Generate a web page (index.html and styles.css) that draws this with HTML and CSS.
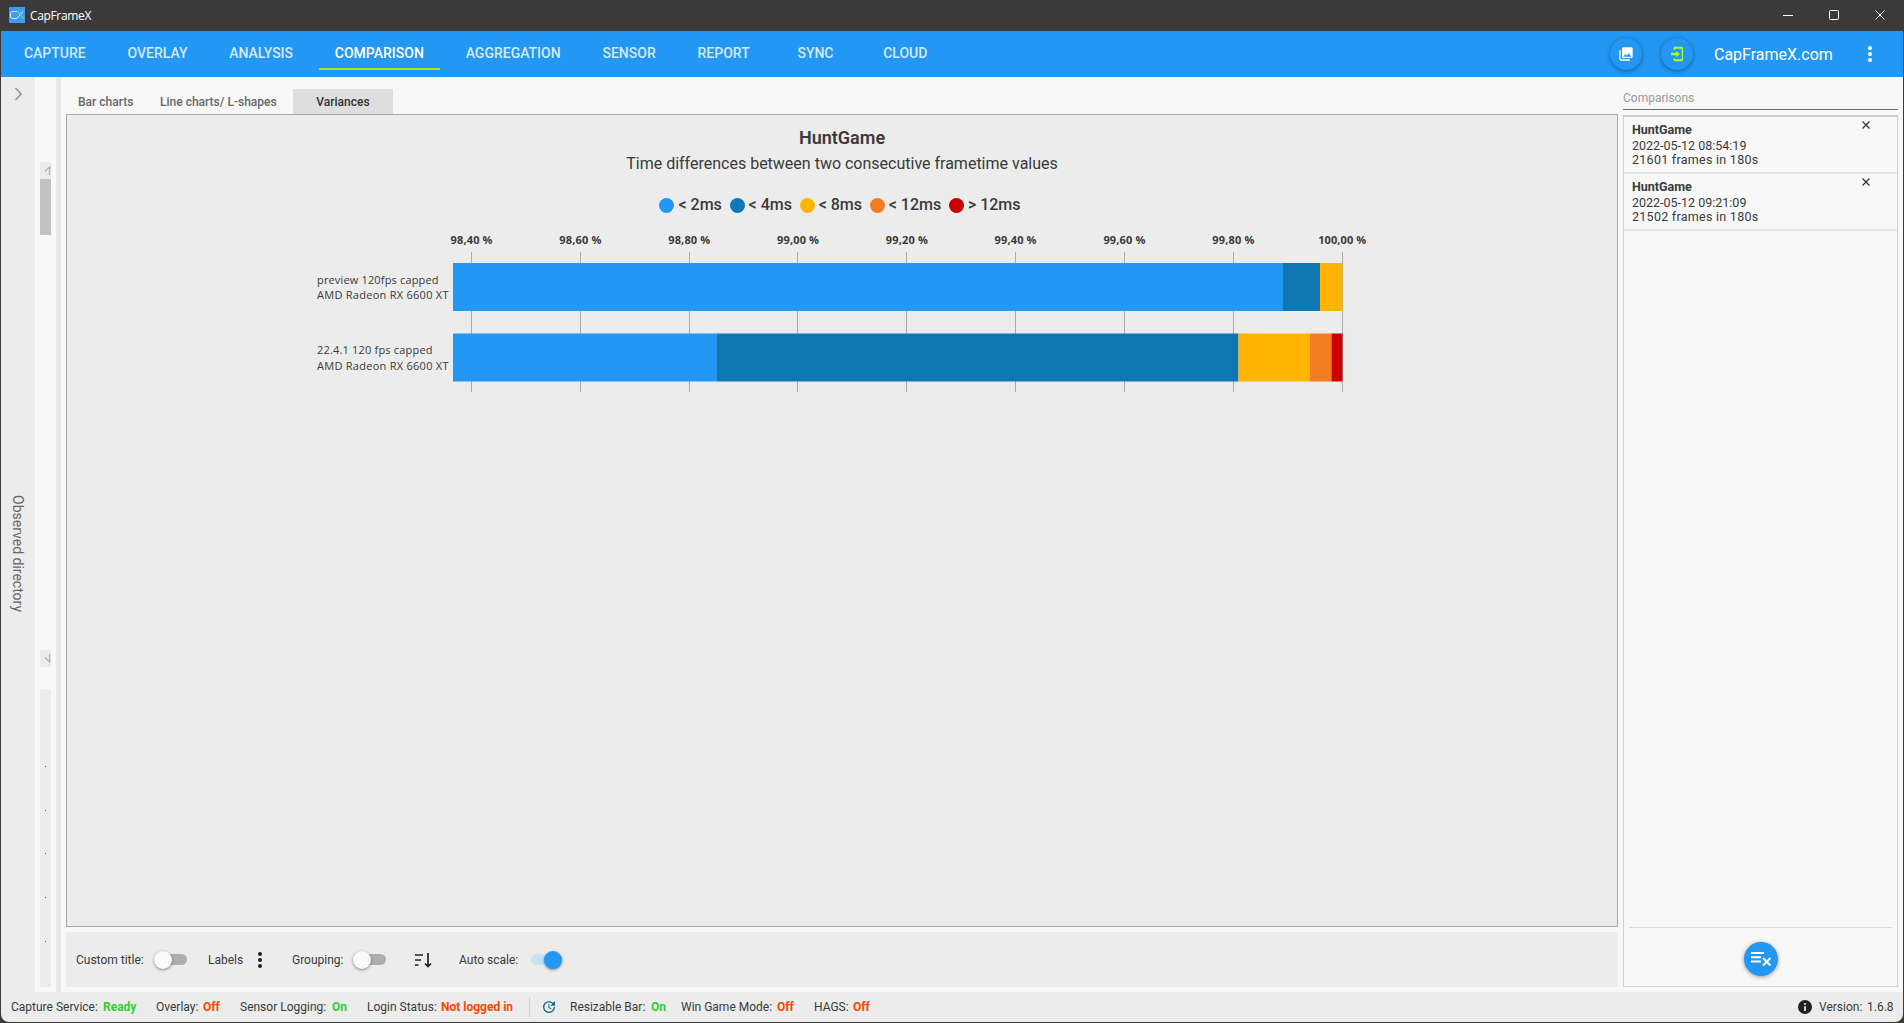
FILE: index.html
```html
<!DOCTYPE html>
<html>
<head>
    <meta charset="utf-8" />
    <title>CapFrameX</title>
    <link rel="stylesheet" href="styles.css">
</head>
<body>
    <div class="window">
        <div class="titlebar">
            <svg class="logo" width="16" height="16" viewBox="0 0 16 16">
                <rect width="16" height="16" fill="#3d9bff" />
                <path d="M8 4.500H3L1.500 6V10L3 11.500H8L14 4.500" fill="none" stroke="#d8ecff" />
                <path d="M9 4.500L14.500 11.500" fill="none" stroke="#6be03a" stroke-width="1.300" />
            </svg>
            <span class="app-name">CapFrameX</span>
            <div class="win-buttons">
                <svg width="10" height="10"><path d="M0 5.500H10" stroke="#fff" /></svg>
                <svg width="10" height="10"><rect x="0.500" y="0.500" width="9" height="9" rx="1" fill="none" stroke="#fff" /></svg>
                <svg width="10" height="10"><path d="M0.500 0.500L9.500 9.500M9.500 0.500L0.500 9.500" stroke="#fff" /></svg>
            </div>
        </div>

        <div class="navbar">
            <ul class="menu">
                <li>CAPTURE</li>
                <li>OVERLAY</li>
                <li>ANALYSIS</li>
                <li class="active">COMPARISON</li>
                <li>AGGREGATION</li>
                <li>SENSOR</li>
                <li>REPORT</li>
                <li>SYNC</li>
                <li>CLOUD</li>
            </ul>
            <div class="round">
                <svg width="16" height="16" viewBox="0 0 24 24"><path fill="#fff" d="M22 16V4c0-1.100-.9-2-2-2H8c-1.100 0-2 .9-2 2v12c0 1.100.9 2 2 2h12c1.100 0 2-.9 2-2zm-11-4l2.030 2.710L16 11l4 5H8l3-4zM2 6v14c0 1.100.9 2 2 2h14v-2H4V6H2z" /></svg>
            </div>
            <div class="round">
                <svg width="16" height="16" viewBox="0 0 24 24"><path fill="#adff2f" d="M19 1H9C7.900 1 7 1.900 7 3v3h2V4h10v16H9v-2H7v3c0 1.100.9 2 2 2h10c1.100 0 2-.9 2-2V3c0-1.100-.9-2-2-2zM11 17l5-5-5-5v3H3v4h8z" /></svg>
            </div>
            <span class="site">CapFrameX.com</span>
            <svg class="more" width="4" height="16"><g fill="#fff"><circle cx="2" cy="2" r="2" /><circle cx="2" cy="8" r="2" /><circle cx="2" cy="14" r="2" /></g></svg>
        </div>

        <div class="content">
            <div class="expander">
                <svg width="8" height="14"><path d="M1.500 1L7 7L1.500 13" fill="none" stroke="#999" stroke-width="1.700" /></svg>
                <span>Observed directory</span>
            </div>
            <div class="strip">
                <div class="scroll-btn"><svg width="7" height="9"><path d="M5.500 9V1M1 5.500L5.500 1L7 2.500" fill="none" stroke="#b4b4b4" stroke-width="1.300" /></svg></div>
                <div class="scroll-thumb"></div>
                <div class="scroll-track"></div>
                <div class="scroll-btn"><svg width="7" height="9"><path d="M5.500 0V8M1 3.500L5.500 8L7 6.500" fill="none" stroke="#b4b4b4" stroke-width="1.300" /></svg></div>
                <div class="info"><i></i><i></i><i></i><i></i><i></i></div>
            </div>
            <div class="splitter"></div>

            <div class="main">
                <ul class="tabs">
                    <li class="tab-bar">Bar charts</li>
                    <li class="tab-line">Line charts/ L-shapes</li>
                    <li class="tab-var active">Variances</li>
                </ul>
                <div class="chart">
                    <h1>HuntGame</h1>
                    <h2>Time differences between two consecutive frametime values</h2>
                    <ul class="legend">
                        <li><i class="c1"></i>&lt; 2ms</li>
                        <li><i class="c2"></i>&lt; 4ms</li>
                        <li><i class="c3"></i>&lt; 8ms</li>
                        <li><i class="c4"></i>&lt; 12ms</li>
                        <li><i class="c5"></i>&gt; 12ms</li>
                    </ul>
                    <svg class="plot" width="1140" height="170">
                        <g class="grid">
                            <path d="M221.500 27V167M330.500 27V167M439.500 27V167M547.500 27V167M656.500 27V167M765.500 27V167M874.500 27V167M983.500 27V167M1092.500 27V167" />
                        </g>
                        <g class="axis">
                            <text x="221.500" y="19" textLength="42">98,40 %</text>
                            <text x="330.300" y="19" textLength="42">98,60 %</text>
                            <text x="439.200" y="19" textLength="42">98,80 %</text>
                            <text x="548" y="19" textLength="42">99,00 %</text>
                            <text x="656.800" y="19" textLength="42">99,20 %</text>
                            <text x="765.500" y="19" textLength="42">99,40 %</text>
                            <text x="874.400" y="19" textLength="42">99,60 %</text>
                            <text x="983.300" y="19" textLength="42">99,80 %</text>
                            <text x="1092.200" y="19" textLength="48">100,00 %</text>
                        </g>
                        <g class="labels">
                            <text x="67" y="58.500" textLength="121.500">preview 120fps capped</text>
                            <text x="67" y="74" textLength="131.500">AMD Radeon RX 6600 XT</text>
                            <text x="67" y="129" textLength="115.500">22.4.1 120 fps capped</text>
                            <text x="67" y="145" textLength="131.500">AMD Radeon RX 6600 XT</text>
                        </g>
                        <!-- preview 120fps capped -->
                        <rect class="c1" x="203" y="38" width="830" height="48" />
                        <rect class="c2" x="1033" y="38" width="37" height="48" />
                        <rect class="c3" x="1070" y="38" width="22.500" height="48" />
                        <!-- 22.4.1 120 fps capped -->
                        <rect class="c1" x="203" y="108.500" width="264" height="48" />
                        <rect class="c2" x="467" y="108.500" width="521.500" height="48" />
                        <rect class="c3" x="988.500" y="108.500" width="71.500" height="48" />
                        <rect class="c4" x="1060" y="108.500" width="21.500" height="48" />
                        <rect class="c5" x="1081.500" y="108.500" width="11" height="48" />
                    </svg>
                </div>
                <div class="toolbar">
                    <span class="t-title">Custom title:</span>
                    <div class="switch"><i></i></div>
                    <span class="t-labels">Labels</span>
                    <svg class="dots" width="4" height="16"><g fill="#222"><circle cx="2" cy="2" r="2" /><circle cx="2" cy="8" r="2" /><circle cx="2" cy="14" r="2" /></g></svg>
                    <span class="t-group">Grouping:</span>
                    <div class="switch"><i></i></div>
                    <svg class="sort" width="18" height="16"><path d="M1 3H9M1 8H7M1 13H4.500M14 1V14M11 11.500L14 14.500L17 11.500" fill="none" stroke="#222" stroke-width="1.700" /></svg>
                    <span class="t-scale">Auto scale:</span>
                    <div class="switch on"><i></i></div>
                </div>
            </div>

            <div class="side">
                <div class="side-title">Comparisons</div>
                <div class="list">
                    <div class="record">
                        <svg width="8" height="8"><path d="M0.500 0.500L7.500 7.500M7.500 0.500L0.500 7.500" stroke="#333" stroke-width="1.200" /></svg>
                        <b>HuntGame</b>
                        <p>2022-05-12 08:54:19</p>
                        <p class="frames">21601 frames in 180s</p>
                    </div>
                    <div class="record">
                        <svg width="8" height="8"><path d="M0.500 0.500L7.500 7.500M7.500 0.500L0.500 7.500" stroke="#333" stroke-width="1.200" /></svg>
                        <b>HuntGame</b>
                        <p>2022-05-12 09:21:09</p>
                        <p class="frames">21502 frames in 180s</p>
                    </div>
                    <div class="list-foot">
                        <div class="clear">
                            <svg width="22" height="16"><path d="M1 2H14M1 6.300H11M1 10.600H11" stroke="#fff" stroke-width="2" /><path d="M13 7L20.500 14.500M20.500 7L13 14.500" stroke="#fff" stroke-width="2" /></svg>
                        </div>
                    </div>
                </div>
            </div>
        </div>

        <div class="status">
            <span class="s1">Capture Service:</span><b class="ok">Ready</b>
            <span class="s2">Overlay:</span><b class="bad">Off</b>
            <span class="s3">Sensor Logging:</span><b class="ok">On</b>
            <span class="s4">Login Status:</span><b class="bad">Not logged in</b>
            <i class="sep"></i>
            <svg class="refresh" width="16" height="16" viewBox="0 0 24 24"><path fill="#1b6594" d="M21 10.120h-6.780l2.740-2.820c-2.730-2.700-7.150-2.800-9.880-.1-2.730 2.710-2.730 7.080 0 9.790s7.150 2.710 9.880 0C18.320 15.650 19 14.080 19 12.100h2c0 1.980-.88 4.550-2.640 6.290-3.510 3.480-9.210 3.480-12.720 0-3.500-3.470-3.530-9.110-.02-12.580s9.140-3.470 12.650 0L21 3v7.120zM12.500 8v4.250l3.500 2.080-.72 1.210L11 13V8h1.500z" /></svg>
            <span class="s5">Resizable Bar:</span><b class="ok">On</b>
            <span class="s6">Win Game Mode:</span><b class="bad">Off</b>
            <span class="s7">HAGS:</span><b class="bad">Off</b>
            <svg class="about" width="14" height="14"><circle cx="7" cy="7" r="7" fill="#222" /><path d="M7 3V4.800M7 6.200V11" stroke="#fff" stroke-width="1.600" /></svg>
            <span class="version">Version:</span><span class="number">1.6.8</span>
        </div>
    </div>
</body>
</html>
```
FILE: styles.css
```css
* {
    box-sizing: border-box;
}

body {
    margin: 0;
    background-color: #3a3a3a;
    font-family: Roboto, "Liberation Sans", sans-serif;
    font-size: 12px;
    color: #3a3a3a;
}

ul, h1, h2, p {
    list-style: none;
    margin: 0;
    padding: 0;
}

svg {
    display: block;
    flex: none;
}

.window {
    height: 1023px;
    display: flex;
    flex-direction: column;
    padding: 0 1px 1px;
    overflow: hidden;
}

.titlebar {
    height: 31px;
    display: flex;
    align-items: center;
    padding: 0 0 1px 8px;
    color: #fff;
}

.app-name {
    margin-left: 5px;
    font-family: "Open Sans", sans-serif;
    font-size: 12px;
    letter-spacing: -0.35px;
}

.win-buttons {
    margin-left: auto;
    margin-right: 18px;
    display: flex;
    gap: 36px;
}

.navbar {
    height: 46px;
    background-color: #2297f3;
    display: flex;
    align-items: center;
    color: #fff;
}

.menu {
    display: flex;
    flex: 1;
    align-self: flex-start;
    padding: 5px 0 0 2px;
}

    .menu li {
        min-width: 80px;
        height: 34px;
        margin: 0 4.9px;
        padding: 0 16px;
        line-height: 34px;
        text-align: center;
        font-size: 14px;
        font-weight: 500;
        color: #d3eafd;
        border-bottom: 2px solid transparent;
    }

        .menu li.active {
            color: #fff;
            border-bottom-color: #aeea00;
        }

.round {
    width: 32px;
    height: 32px;
    margin-right: 19px;
    border-radius: 50%;
    background-color: #2297f3;
    box-shadow: 0 1px 4px rgba(0, 0, 0, 0.4);
    display: flex;
    align-items: center;
    justify-content: center;
}

.site {
    width: 119px;
    margin-left: 2px;
    font-size: 16px;
    white-space: nowrap;
}

.more {
    margin: 0 31px 0 35px;
}

.content {
    flex: 1;
    display: flex;
    min-height: 0;
    background-color: #f8f8f8;
}

.expander {
    width: 34px;
    background-color: #ececec;
    display: flex;
    flex-direction: column;
    align-items: center;
    padding: 10px 0 0 0;
}

    .expander span {
        writing-mode: vertical-rl;
        margin-top: 394px;
        font-size: 14px;
        line-height: 20px;
        color: #666;
        white-space: nowrap;
    }

.strip {
    width: 21px;
    padding: 85px 5px 5px;
    display: flex;
    flex-direction: column;
}

.scroll-btn {
    height: 17px;
    padding: 4px 0 0 4px;
    background-color: #ebebeb;
}

.scroll-thumb {
    height: 56px;
    background-color: #c1c1c1;
}

.scroll-track {
    height: 415px;
}

.info {
    flex: 1;
    margin-top: 22px;
    background-color: #ececec;
    display: flex;
    flex-direction: column;
    align-items: center;
    padding-top: 77px;
    gap: 42.7px;
}

    .info i {
        width: 1px;
        height: 1px;
        background-color: #555;
    }

.splitter {
    width: 5px;
    background-color: #e8e8e8;
}

.main {
    width: 1557px;
    padding: 12px 0 5px 5px;
    display: flex;
    flex-direction: column;
}

.tabs {
    display: flex;
    height: 25px;
    line-height: 26px;
    font-weight: 500;
    color: #666;
    white-space: nowrap;
}

.tab-bar {
    width: 82px;
    padding-left: 12px;
}

.tab-line {
    width: 145px;
    padding-left: 12px;
}

.tab-var {
    width: 100px;
    text-align: center;
}

.tabs .active {
    background-color: #dedede;
    color: #333;
}

.chart {
    height: 813px;
    border: 1px solid #a9a9a9;
    background-color: #ececec;
    display: flex;
    flex-direction: column;
    align-items: center;
    padding-top: 11px;
}

    .chart h1 {
        font-size: 18px;
        line-height: 24px;
        font-weight: 600;
    }

    .chart h2 {
        margin-top: 2px;
        font-size: 16px;
        line-height: 24px;
        font-weight: 400;
    }

.legend {
    display: flex;
    gap: 7.7px;
    margin: 19px 4px 0 0;
    font-size: 16px;
    line-height: 20px;
    font-weight: 500;
}

    .legend li {
        display: flex;
        align-items: center;
    }

    .legend i {
        width: 15px;
        height: 15px;
        margin-right: 4px;
        border-radius: 50%;
    }

.plot {
    align-self: flex-start;
    margin: 10px 0 0 183px;
}

.grid path {
    fill: none;
    stroke: #ababab;
}

.axis text {
    font-family: "Open Sans", sans-serif;
    font-size: 11px;
    font-weight: 700;
    text-anchor: middle;
    fill: #3a3a3a;
}

.labels text {
    font-family: "Open Sans", sans-serif;
    font-size: 11px;
    fill: #3a3a3a;
}

.c1 {
    background-color: #2297f3;
    fill: #2297f3;
}

.c2 {
    background-color: #0f78b4;
    fill: #0f78b4;
}

.c3 {
    background-color: #ffb400;
    fill: #ffb400;
}

.c4 {
    background-color: #f17d20;
    fill: #f17d20;
}

.c5 {
    background-color: #c80000;
    fill: #c80000;
}

.toolbar {
    height: 55px;
    margin-top: 5px;
    padding-left: 10px;
    background-color: #ececec;
    display: flex;
    align-items: center;
    white-space: nowrap;
}

.t-title {
    width: 78px;
}

.t-labels {
    width: 50px;
    margin-left: 21px;
}

.t-group {
    width: 61px;
    margin-left: 30px;
}

.sort {
    margin-left: 28px;
}

.t-scale {
    width: 72px;
    margin-left: 27px;
}

.switch {
    width: 33px;
    height: 18px;
    display: flex;
    align-items: center;
}

    .switch::before {
        content: "";
        order: 1;
        width: 24px;
        height: 11px;
        margin-left: -9px;
        border-radius: 6px;
        background-color: #aeaeae;
    }

    .switch i {
        z-index: 1;
        flex: none;
        width: 18px;
        height: 18px;
        border-radius: 50%;
        background-color: #fafafa;
        box-shadow: 0 1px 3px rgba(0, 0, 0, 0.45);
    }

    .switch.on::before {
        order: 0;
        margin: 0 -11px 0 0;
        background-color: #c8e2f3;
    }

    .switch.on i {
        background-color: #2297f3;
    }

.side {
    flex: 1;
    padding: 0 5px 5px;
    display: flex;
    flex-direction: column;
}

.side-title {
    height: 33px;
    padding-top: 13px;
    line-height: 16px;
    color: #999;
    border-bottom: 1px solid #707070;
}

.list {
    flex: 1;
    margin-top: 5px;
    border: 1px solid #cfcfcf;
    border-top-width: 2px;
    display: flex;
    flex-direction: column;
}

.record {
    position: relative;
    height: 57px;
    padding: 5px 8px 0;
    border-bottom: 2px solid #e4e4e4;
    line-height: 14px;
}

    .record b {
        display: block;
        margin-bottom: 2px;
        line-height: 15px;
        font-size: 12.5px;
    }

    .record p {
        font-size: 12.5px;
    }

    .record .frames {
        letter-spacing: 0.27px;
    }

    .record svg {
        position: absolute;
        right: 27px;
        top: 4px;
    }

.list-foot {
    height: 59px;
    margin: auto 5px 0;
    padding-top: 3px;
    border-top: 1px solid #d8d8d8;
    display: flex;
    align-items: center;
    justify-content: center;
}

.clear {
    width: 34px;
    height: 34px;
    border-radius: 50%;
    background-color: #2297f3;
    box-shadow: 0 1px 4px rgba(0, 0, 0, 0.4);
    display: flex;
    align-items: center;
    justify-content: center;
}

.status {
    height: 30px;
    padding-left: 10px;
    background-color: #ececec;
    border-radius: 0 0 8px 8px;
    display: flex;
    align-items: center;
    white-space: nowrap;
}

.status b {
    font-weight: 700;
}

.ok {
    color: #32cd32;
}

.bad {
    color: #ff4500;
}

.s1 {
    width: 92px;
}

.s2 {
    width: 47px;
}

.s3 {
    width: 92px;
}

.s4 {
    width: 74px;
}

.s5 {
    width: 81px;
}

.s6 {
    width: 96px;
}

.s7 {
    width: 39px;
}

.s1 + b {
    width: 53px;
}

.s2 + b {
    width: 37px;
}

.s3 + b {
    width: 35px;
}

.s4 + b {
    width: 88px;
}

.s5 + b {
    width: 30px;
}

.s6 + b {
    width: 37px;
}

.sep {
    width: 1px;
    height: 20px;
    background-color: #d2d2d2;
}

.refresh {
    margin: 0 13px 0 11px;
}

.about {
    margin: 0 7px 0 auto;
}

.version {
    width: 48px;
}

.number {
    width: 36px;
}
```
